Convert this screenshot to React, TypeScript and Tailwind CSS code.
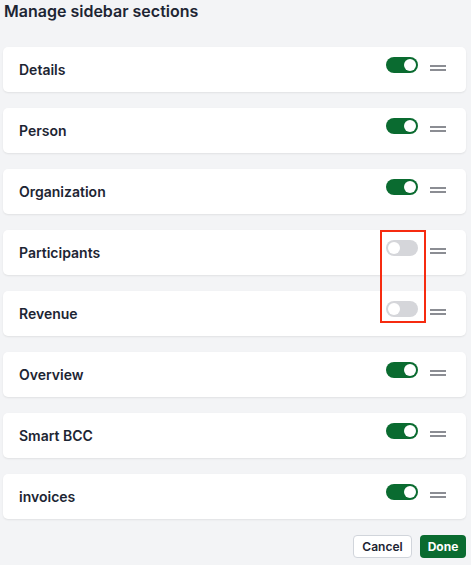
import React from "react";

const items: { name: string; on: boolean }[] = [
  { name: "Details", on: true },
  { name: "Person", on: true },
  { name: "Organization", on: true },
  { name: "Participants", on: false },
  { name: "Revenue", on: false },
  { name: "Overview", on: true },
  { name: "Smart BCC", on: true },
  { name: "invoices", on: true },
];

function Toggle({ on }: { on: boolean }) {
  return (
    <div
      className={
        "w-[32px] h-[16px] rounded-full flex items-center px-[2px] " +
        (on ? "bg-[#0a6b30] justify-end" : "bg-[#d5d6da] justify-start")
      }
    >
      <div className="w-[12px] h-[12px] rounded-full bg-white" />
    </div>
  );
}

function Handle() {
  return (
    <div className="w-[16px] flex flex-col gap-[2px]">
      <div className="h-[2px] bg-[#8b8d93]" />
      <div className="h-[2px] bg-[#8b8d93]" />
    </div>
  );
}

export default function App() {
  return (
    <div
      className="w-[471px] h-[565px] bg-[#f3f4f6] px-[3px] text-[#1d2533] relative"
      style={{ fontFamily: "Inter, 'Noto Sans', sans-serif" }}
    >
      <h1 className="text-[16px] leading-5 font-semibold pl-[1px] pt-[1px]">Manage sidebar sections</h1>
      <div className="mt-[26px] w-[463px] flex flex-col gap-[16px]">
        {items.map((it) => (
          <div
            key={it.name}
            className="h-[45px] bg-white rounded-[5px] shadow-[0_1px_2px_rgba(0,0,0,0.08)] flex items-center pl-[16px] pr-[20px]"
          >
            <span className="text-[14px] font-semibold flex-1">{it.name}</span>
            <div className="mb-[9px]">
              <Toggle on={it.on} />
            </div>
            <div className="ml-[12px] mb-[3px]">
              <Handle />
            </div>
          </div>
        ))}
      </div>
      <div className="w-[463px] flex justify-end gap-[8px] mt-[16px]">
        <button className="w-[59px] h-[23px] bg-white border border-[#d1d5db] rounded-[4px] text-[12px] font-semibold text-[#1d2533]">
          Cancel
        </button>
        <button className="w-[46px] h-[23px] bg-[#0a6b30] rounded-[4px] text-[12px] font-bold text-white">
          Done
        </button>
      </div>
      <div className="absolute left-[380px] top-[230px] w-[46px] h-[93px] border-2 border-[#f62b10]" />
    </div>
  );
}
